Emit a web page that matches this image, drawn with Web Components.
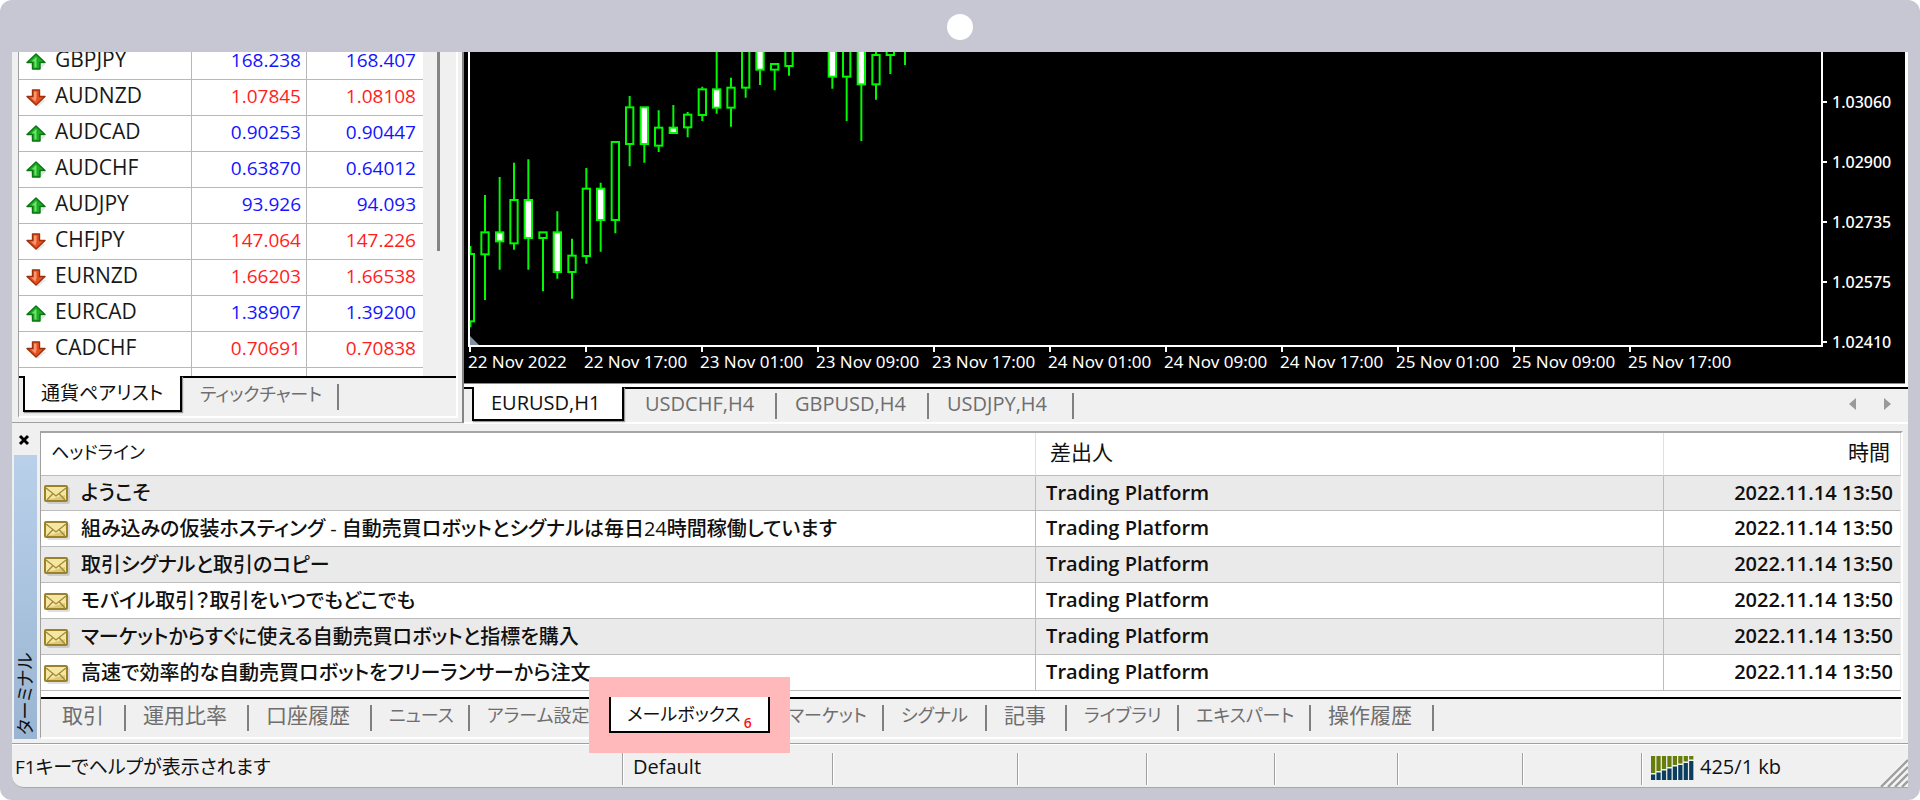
<!DOCTYPE html>
<html lang="ja">
<head>
<meta charset="utf-8">
<title>Trading Platform</title>
<style>
html{background:#fff}
body{margin:0;font-family:"Open Sans","Noto Sans CJK JP",sans-serif;font-feature-settings:"palt";font-size:20px;color:#101010}
</style>
</head>
<body>
<terminal-window>
  <market-watch slot="watch"></market-watch>
  <price-chart slot="chart"></price-chart>
  <mail-box slot="mail"></mail-box>
  <status-bar slot="status"></status-bar>
</terminal-window>
<script>
const define = (name, html, setup) => customElements.define(name, class extends HTMLElement {
  constructor() {
    super();
    this.attachShadow({mode: 'open'}).innerHTML = `<style>*{box-sizing:border-box}button{font:inherit;font-feature-settings:inherit;color:inherit;background:none;border:0;border-radius:0;padding:0;margin:0;text-align:left}</style>` + html;
  }
  connectedCallback() { if (setup) setup(this, this.shadowRoot); }
});

/* Device frame around the whole application */
define('terminal-window', `
<style>
:host{display:flex;flex-direction:column;min-height:100vh;box-sizing:border-box;background:#c7c7d3;border-radius:12px;padding:0 12px 12px}
.bezel{height:52px;display:flex;justify-content:center;align-items:center}
.bezel i{width:26px;height:26px;border-radius:50%;background:#fff;margin-top:2px}
.app{background:#f0f0f0;flex:1;display:flex;flex-direction:column;border-bottom:1px solid #a8a8ac;border-bottom-left-radius:12px;overflow:hidden}
.work{display:flex}
</style>
<div class="bezel"><i></i></div>
<div class="app">
  <div class="work"><slot name="watch"></slot><slot name="chart"></slot></div>
  <slot name="mail"></slot>
  <slot name="status"></slot>
</div>`);

/* One tab: active, or flat with a divider at its right */
define('tab-item', `
<style>
:host{display:block;flex:none;width:var(--w);font-size:20px}
button{display:flex;align-items:center;width:100%;height:100%;border-top:2px solid #000;padding-left:var(--pad,18px);color:#6e6e6e;white-space:nowrap}
.t{line-height:24px;margin-bottom:var(--lift,6px)}
button::after{content:"";width:2px;height:26px;background:#808080;margin-left:auto}
:host([active]) button{height:calc(100% - var(--inset,4px));background:#fff;color:#101010;border:2px solid #000;border-top:0;position:relative;box-shadow:1px 1px 1px #999}
:host([active]) button::after{display:none}
:host([active]) .t{margin-bottom:0}
:host([marked]) button::before{content:"";position:absolute;inset:-20px -22px -22px;border:20px solid #ffb9ba;z-index:1}
</style>
<button type="button" role="tab"><span class="t"><slot></slot></span><slot name="badge"></slot></button>`,
(el, root) => {
  el.style.setProperty('--w', el.getAttribute('w') + 'px');
  if (el.hasAttribute('active')) root.querySelector('button').setAttribute('aria-selected', 'true');
});

/* Strip that holds the tabs and continues their top line */
define('tab-strip', `
<style>
:host{display:flex;height:40px;background:#f0f0f0}
.lead{width:var(--lead,0px);border-top:2px solid #000}
.rest{flex:1;border-top:2px solid #000;display:flex;justify-content:flex-end;align-items:center}
</style>
<div class="lead"></div><slot></slot><div class="rest"><slot name="end"></slot></div>`);

const arrow = up => up
 ? `<svg width="22" height="20" viewBox="0 0 22 20"><path d="M4 12l8 7 8-7" fill="#000" opacity=".1"/><path d="M10 2L19 10.500H14V17H6.500V10.500H1z" fill="#1cae22" stroke="#0b7412" stroke-width="1.400" stroke-linejoin="round"/><path d="M10 5L5.500 9.500h3v6h2V6z" fill="#8df08a" opacity=".75"/></svg>`
 : `<svg width="22" height="20" viewBox="0 0 22 20"><path d="M4 13l8 6 8-7" fill="#000" opacity=".1"/><path d="M6.500 2H13.500V8.500H19L10 17 1 8.500H6.500z" fill="#e8501c" stroke="#9c300c" stroke-width="1.400" stroke-linejoin="round"/><path d="M8 3.500h2.500V10l-1 3.500L5 9.500h3z" fill="#ffae90" opacity=".75"/></svg>`;

define('market-watch', `
<style>
:host{display:block;flex:none;box-sizing:border-box;width:452px;height:371px;border-right:2px solid #858585;border-bottom:1px solid #a0a0a0;padding:0 4px 4px 6px}
.in{border:2px solid #fff;border-top:0;border-left:1px solid #a0a0a0}
.view{display:flex;height:324px;overflow:hidden}
table{border-collapse:separate;border-spacing:0;table-layout:fixed;width:404px;margin-top:-8px;background:#fff;flex:none}
td{height:36px;border-bottom:1px solid #b8b8b8;padding:0}
td+td{border-left:1px solid #b8b8b8;text-align:right;font-size:19px;padding-right:5px;line-height:24px;padding-bottom:3px}
td:last-child{padding-right:7px}
.n{display:flex;align-items:center;font-size:21px;line-height:24px;gap:7px;padding-left:7px;height:35px}
.n svg{margin-top:1px}
.n span{margin-bottom:5px}
.up{color:#1414ff}.down{color:#ff1e1e}
.bar{flex:1}
.bar i{display:block;width:3px;height:199px;margin-left:14px;background:#858585}
</style>
<div class="in">
  <div class="view"><table><colgroup><col style="width:172px"><col style="width:115px"><col></colgroup><tbody></tbody></table><div class="bar"><i></i></div></div>
  <tab-strip style="--lead:4px"><tab-item active w="159" style="font-size:19px;--pad:16px">通貨ペアリスト</tab-item><tab-item w="157" style="font-size:18px">ティックチャート</tab-item></tab-strip>
</div>`,
(el, root) => {
  const rows = [['GBPJPY',1,'168.238','168.407'],['AUDNZD',0,'1.07845','1.08108'],['AUDCAD',1,'0.90253','0.90447'],['AUDCHF',1,'0.63870','0.64012'],['AUDJPY',1,'93.926','94.093'],['CHFJPY',0,'147.064','147.226'],['EURNZD',0,'1.66203','1.66538'],['EURCAD',1,'1.38907','1.39200'],['CADCHF',0,'0.70691','0.70838']];
  root.querySelector('tbody').innerHTML = rows.map(([n,u,b,a]) => `<tr class="${u ? 'up' : 'down'}"><td><div class="n">${arrow(u)}<span style="color:#181818">${n}</span></div></td><td>${b}</td><td>${a}</td></tr>`).join('') + '<tr><td></td><td></td><td></td></tr>';
});

define('price-chart', `
<style>
:host{display:flex;flex-direction:column;flex:1;min-width:0;border-bottom:2px solid #fff;height:372px;box-sizing:border-box}
.black{background:#000;color:#fff;display:grid;grid-template-columns:minmax(0,1fr) 82px;height:332px;flex:none;margin-right:3px;box-shadow:3px 0 #fff;border-bottom:1px solid #8a8a8a;font-family:"Noto Sans",sans-serif;font-weight:500}
.left{padding-left:4px;min-width:0}
.plot{border:2px solid #fff;border-top:0;height:295px;overflow:hidden}
.plot svg{display:block}
.dates{display:flex;overflow:hidden;font-size:17px;font-weight:400;line-height:20px}
.dates span{width:116px;flex:none;white-space:nowrap}
.dates span::before{content:"";display:block;width:2px;height:5px;background:#fff;margin-left:1px}
.prices{padding-top:20px;font-size:16px}
.prices div{height:60px;display:flex;align-items:center;gap:5px}
.prices div::before{content:"";width:4px;height:2px;background:#fff}
tab-strip{height:35px;margin-top:3px;box-shadow:0 -3px #fff;--lead:8px;--inset:1px;--lift:4px}
.nav{display:flex;gap:28px;padding-right:17px;padding-bottom:4px}
.nav button{width:7px;height:12px;display:block}
.nav svg{display:block}
</style>
<div class="black">
  <div class="left"><div class="plot"></div><div class="dates"></div></div>
  <div class="prices"></div>
</div>
<tab-strip>
  <tab-item active w="152" style="--pad:17px">EURUSD,H1</tab-item>
  <tab-item w="153" style="--pad:21px">USDCHF,H4</tab-item>
  <tab-item w="152">GBPUSD,H4</tab-item>
  <tab-item w="145">USDJPY,H4</tab-item>
  <div class="nav" slot="end"><button type="button" aria-label="Previous"><svg width="7" height="12"><path d="M7 0v12L0 6z" fill="#999"/></svg></button><button type="button" aria-label="Next"><svg width="7" height="12"><path d="M0 0v12l7-6z" fill="#999"/></svg></button></div>
</tab-strip>`,
(el, root) => {
  /* centre x, high, body top, body bottom, low, filled; three units to a pixel */
  const c = [[91,618,640,846,862,0],[135,465,575,645,780,0],[179,411,575,606,689,1],[222,368,478,612,629,0],[265,358,478,596,689,1],[309,575,575,596,754,0],[352,514,575,698,716,1],[396,596,645,698,776,0],[439,384,444,650,671,0],[482,428,444,542,635,1],[526,304,304,542,580,0],[569,168,200,314,379,0],[613,200,200,314,368,1],[656,211,261,319,336,0],[700,195,261,281,281,1],[743,216,222,264,292,0],[787,140,146,227,243,0],[830,20,146,205,221,1],[873,113,141,205,260,0],[917,20,20,145,173,0],[960,20,20,91,135,1],[1004,70,70,91,151,0],[1047,20,20,80,107,0],[1177,20,20,112,146,1],[1220,20,20,112,243,0],[1264,20,20,135,303,1],[1308,20,43,135,179,0],[1351,20,20,47,102,0],[1395,20,20,20,75,0]];
  root.querySelector('.plot').innerHTML = `<svg width="450" height="293" viewBox="90 36 1350 879" stroke="#00f800" stroke-width="6">` +
    c.map(([x,h,t,b,l,f]) => `<path d="M${x} ${h}V${t}M${x} ${b}V${l}"/><rect x="${x-11}" y="${t+2}" width="22" height="${Math.max(b-t-4,1)}" fill="${f ? '#fff' : '#000'}"/>`).join('') +
    `<path d="M90 888l27 27H90z" fill="#8090a4" stroke="none"/></svg>`;
  root.querySelector('.dates').innerHTML = ['22 Nov 2022','22 Nov 17:00','23 Nov 01:00','23 Nov 09:00','23 Nov 17:00','24 Nov 01:00','24 Nov 09:00','24 Nov 17:00','25 Nov 01:00','25 Nov 09:00','25 Nov 17:00'].map(t => `<span>${t}</span>`).join('');
  root.querySelector('.prices').innerHTML = ['1.03060','1.02900','1.02735','1.02575','1.02410'].map(t => `<div>${t}</div>`).join('');
});

define('mail-box', `
<style>
:host{display:flex;padding:7px 5px 4px 0;border-bottom:1px solid #a0a0a0}
.side{width:28px;flex:none;display:flex;flex-direction:column}
.x{display:block;width:12px;height:12px;margin:3px 0 9px 6px}
.x svg{display:block}
.name{flex:1;width:23px;margin-left:2px;display:flex;align-items:center;justify-content:flex-start;writing-mode:vertical-rl;text-orientation:sideways;transform:rotate(180deg);background:linear-gradient(#9ab5d2,#b9d0ea);font-size:18px;line-height:23px;padding-top:4px}
.panel{flex:1;min-width:0;border:2px solid #fff;border-top:2px solid #a5a5a5;border-left:1px solid #a0a0a0}
table{border-collapse:separate;border-spacing:0;table-layout:fixed;width:100%;background:#fff}
th,td{border-bottom:1px solid #bcbcbc;padding:0;text-align:left;white-space:nowrap;line-height:26px}
th{height:43px;font-weight:400;font-size:21px;border-right:1px solid #e0e0e0;padding:0 0 4px 14px}
th.k{font-size:18px;padding-left:10px}
td{height:36px;font-weight:500;border-right:1px solid #bcbcbc;padding-left:10px}
td:not(:first-child){font-weight:600;padding-bottom:1px}
tr:first-child td{height:35px}
tbody tr:nth-child(odd){background:#eaeaea}
td:last-child{border-right-color:#eee;text-align:right;padding:0 7px 1px 0}
th:last-child{text-align:right;padding-right:10px}
td:first-child{padding:0}
.m{display:flex;align-items:center;gap:10px;padding:0 0 0 3px}
.m svg{margin-top:3px}
.gap{height:6px;background:#fff}
.n{color:#ff1414;font-size:14px;font-weight:600;line-height:14px;margin:18px 0 0 3px}
</style>
<div class="side"><button class="x" type="button" aria-label="Close"><svg width="12" height="12"><path d="M2 2l8 8M10 2l-8 8" stroke="#000" stroke-width="3"/></svg></button><div class="name">ターミナル</div></div>
<div class="panel">
<table><colgroup><col style="width:53.5%"><col><col style="width:237px"></colgroup>
<thead><tr><th class="k">ヘッドライン</th><th>差出人</th><th>時間</th></tr></thead><tbody></tbody></table>
<div class="gap"></div>
<tab-strip>
  <tab-item w="85" style="font-size:21px;--pad:21px">取引</tab-item>
  <tab-item w="123" style="font-size:21px;--pad:17px">運用比率</tab-item>
  <tab-item w="123" style="font-size:21px;--pad:17px">口座履歴</tab-item>
  <tab-item w="98" style="font-size:18px;--pad:17px">ニュース</tab-item>
  <tab-item w="139" style="font-size:18px;--pad:17px">アラーム設定</tab-item>
  <tab-item w="161" active marked style="font-size:18px;--pad:16px">メールボックス<span class="n" slot="badge">6</span></tab-item>
  <tab-item w="114" style="font-size:18px">マーケット</tab-item>
  <tab-item w="103" style="font-size:18px;--pad:17px">シグナル</tab-item>
  <tab-item w="80" style="font-size:21px;--pad:17px">記事</tab-item>
  <tab-item w="112" style="font-size:18px;--pad:17px">ライブラリ</tab-item>
  <tab-item w="132" style="font-size:18px;--pad:17px">エキスパート</tab-item>
  <tab-item w="123" style="font-size:21px;--pad:17px">操作履歴</tab-item>
</tab-strip>
</div>`,
(el, root) => {
  const env = `<svg width="27" height="21" viewBox="0 0 27 21"><rect x="3" y="3" width="23" height="17" rx="2" fill="#000" opacity=".13"/><rect x="1" y="2" width="22" height="15" rx="1" fill="#f6e6a4" stroke="#9a8228" stroke-width="2"/><path d="M3 16h18v-5z" fill="#dfc878"/><path d="M2 4l10 8L22 4M3 16l6-6.500M21 16l-6-6.500" fill="none" stroke="#a08a34" stroke-width="1.300"/></svg>`;
  root.querySelector('tbody').innerHTML = ['ようこそ','組み込みの仮装ホスティング - 自動売買ロボットとシグナルは毎日24時間稼働しています','取引シグナルと取引のコピー','モバイル取引？取引をいつでもどこでも','マーケットからすぐに使える自動売買ロボットと指標を購入','高速で効率的な自動売買ロボットをフリーランサーから注文']
    .map(t => `<tr><td><div class="m">${env}<span>${t}</span></div></td><td>Trading Platform</td><td>2022.11.14 13:50</td></tr>`).join('');
});

define('status-bar', `
<style>
:host{display:flex;flex:1;border-top:1px solid #fff;padding-top:8px;min-height:42px;box-sizing:border-box}
div{flex:none;height:32px;display:flex;align-items:center;line-height:26px;padding-bottom:4px;white-space:nowrap;border-left:1px solid #a0a0a0;box-shadow:inset 1px 0 #fff;padding-left:10px}
.help{flex:1;border:0;box-shadow:none;font-size:19px;padding-left:3px}
.net{width:267px;gap:6px;padding-left:9px}
.net svg:first-child{margin-top:2px}
.grip{align-self:flex-end;margin:0 0 -6px auto}
</style>
<div class="help">F1キーでヘルプが表示されます</div>
<div style="width:210px">Default</div><div style="width:185px"></div><div style="width:129px"></div><div style="width:128px"></div><div style="width:123px"></div><div style="width:125px"></div><div style="width:119px"></div>
<div class="net"><svg class="bars" width="43" height="24" viewBox="0 0 43 24"></svg><span>425/1 kb</span><svg class="grip" width="28" height="28" viewBox="0 0 28 28"><path d="M1 28L28 1M8 28L28 8M15 28L28 15M22 28l6-6" stroke="#fff" stroke-width="4"/><path d="M1 28L28 1M8 28L28 8M15 28L28 15M22 28l6-6" stroke="#a0a0a0" stroke-width="2.500"/></svg></div>`,
(el, root) => {
  let s = '';
  for (let i = 0; i < 8; i++) {
    const g = [17,15,13,11,9,7.5,5.5,3.5][i], x = i * 5.45;
    s += `<rect x="${x}" width="4.200" height="${g}" fill="#667d0c"/><rect x="${x}" y="${g + 1.5}" width="4.200" height="${22.5 - g}" fill="#0b3d5e"/>`;
  }
  root.querySelector('.bars').innerHTML = s;
});
</script>
</body>
</html>
